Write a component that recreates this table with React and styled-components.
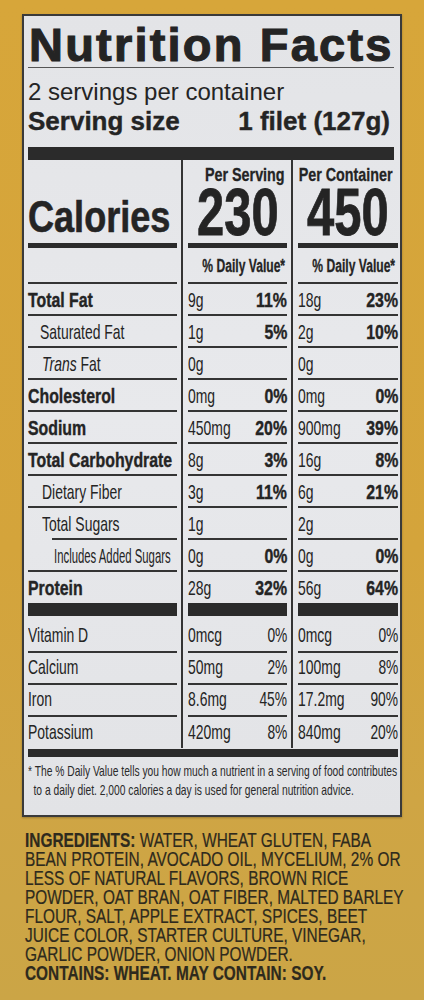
import React from 'react';
import styled, { createGlobalStyle } from 'styled-components';

const COND = `"Liberation Sans", Arial, Helvetica, sans-serif`;
const SANS = `"Liberation Sans", Arial, Helvetica, sans-serif`;
const INK = '#242424';
const RULE = '#343434';

const GlobalStyle = createGlobalStyle`
  html, body { margin: 0; padding: 0; background: #d3a33b; }
  #root { width: 424px; }
`;

const Page = styled.main`
  width: 424px;
  height: 1000px;
  box-sizing: border-box;
  overflow: hidden;
  padding: 14px 22px 0 22px;
  background: linear-gradient(180deg, #d7a63a 0%, #d4a43b 55%, #cfa544 80%, #cba546 100%);
`;

const Label = styled.section`
  box-sizing: border-box;
  width: 380px;
  height: 803px;
  background: linear-gradient(180deg, #e3e4e7 0%, #e8e9ec 50%, #e2e3e6 100%);
  border: 2px solid #3a3a3a;
  padding: 7px 2px 0 4px;
  color: ${INK};
  box-shadow: 0 1px 2px rgba(0, 0, 0, 0.25);
`;

const Header = styled.header`
  margin-right: 4px;
`;

const Title = styled.h1`
  margin: 0;
  font-family: ${SANS};
  font-weight: 700;
  font-size: 47px;
  line-height: 44px;
  letter-spacing: 2.2px;
  white-space: nowrap;
  -webkit-text-stroke: 1.1px ${INK};
  padding-left: 1px;
  border-bottom: 1.5px solid #555;
`;

const Servings = styled.div`
  margin-top: 11px;
  font-family: ${SANS};
  font-size: 24px;
  line-height: 26px;
  white-space: nowrap;
`;

const ServingSize = styled.div`
  margin-top: 2px;
  display: flex;
  justify-content: space-between;
  padding-right: 4px;
  font-family: ${SANS};
  font-weight: 700;
  font-size: 26px;
  line-height: 28px;
  white-space: nowrap;
  -webkit-text-stroke: 0.4px ${INK};
`;

const HeavyBar = styled.div`
  margin-top: 12px;
  height: 13px;
  background: #2b2b2b;
`;

const Row = styled.div`
  display: grid;
  grid-template-columns: 155px 110px 1fr;
`;

const Cell = styled.div`
  min-width: 0;
  padding: 0 ${(p) => (p.$col === 3 ? 0 : 4)}px 0 ${(p) => (p.$col === 1 ? 0 : 5)}px;
  border-right: ${(p) => (p.$col === 3 ? 'none' : `2px solid ${RULE}`)};
  display: flex;
  flex-direction: column;
  justify-content: flex-end;
`;

const CalLabel = styled.div`
  font-family: ${COND};
  font-weight: 700;
  font-size: 44px;
  line-height: 44px;
  white-space: nowrap;
  transform: scaleX(0.82);
  transform-origin: left center;
  -webkit-text-stroke: 0.6px ${INK};
`;

const ColHead = styled.div`
  padding-top: 5px;
  padding-right: ${(p) => p.$pr || 0}px;
  display: flex;
  justify-content: flex-end;
  font-family: ${COND};
  font-weight: 700;
  font-size: 19px;
  line-height: 20px;
  white-space: nowrap;
`;

const HeadText = styled.span`
  flex-shrink: 0;
  display: inline-block;
  transform: scaleX(${(p) => p.$sx});
  transform-origin: right center;
  -webkit-text-stroke: 0.3px ${INK};
`;

const BigNum = styled.div`
  display: flex;
  justify-content: center;
  font-family: ${COND};
  font-weight: 700;
  font-size: 67px;
  line-height: 54px;
  white-space: nowrap;
  -webkit-text-stroke: 0.8px ${INK};
`;

const BigDigits = styled.span`
  flex-shrink: 0;
  display: inline-block;
  transform: scaleX(0.73);
  transform-origin: center;
`;

const MidBar = styled.div`
  margin-top: 4px;
  height: 5px;
  background: #2b2b2b;
`;

const DvLine = styled.div`
  box-sizing: border-box;
  height: 34px;
  display: flex;
  justify-content: flex-end;
  align-items: flex-end;
  padding-bottom: 7px;
  padding-right: ${(p) => p.$pr || 0}px;
  font-family: ${COND};
  font-weight: 700;
  font-size: 18px;
  line-height: 18px;
  white-space: nowrap;
`;

const Line = styled.div`
  box-sizing: border-box;
  height: ${(p) => p.$h}px;
  margin-left: ${(p) => p.$inset || 0}px;
  border-top: ${(p) => (p.$rule ? `2px solid ${RULE}` : 'none')};
  display: flex;
  align-items: flex-end;
  justify-content: space-between;
  padding-bottom: ${(p) => p.$pb ?? 2}px;
  padding-left: ${(p) => p.$indent || 0}px;
  font-family: ${COND};
  font-size: 21px;
  line-height: 24px;
  white-space: nowrap;
`;

const Name = styled.span`
  flex-shrink: 0;
  display: inline-block;
  font-weight: ${(p) => (p.$bold ? 700 : 400)};
  transform: scaleX(${(p) => p.$sx});
  transform-origin: left center;
  ${(p) => (p.$bold ? `-webkit-text-stroke: 0.4px ${INK};` : '')}
`;

const Amount = styled.span`
  flex-shrink: 0;
  display: inline-block;
  transform: scaleX(0.664);
  transform-origin: left center;
`;

/* zero-width anchor at the right edge; its text grows leftwards */
const PctSlot = styled.span`
  flex-shrink: 0;
  width: 0;
  display: flex;
  justify-content: flex-end;
`;

const Pct = styled.span`
  flex-shrink: 0;
  display: inline-block;
  font-weight: ${(p) => (p.$bold ? 700 : 400)};
  transform: scaleX(${(p) => (p.$bold ? 0.755 : 0.656)});
  transform-origin: right center;
  ${(p) => (p.$bold ? `-webkit-text-stroke: 0.4px ${INK};` : '')}
`;

const ColBar = styled.div`
  margin-top: 1px;
  height: 13px;
  background: #2b2b2b;
`;

const FullBar = styled.div`
  margin-top: 1px;
  height: 8px;
  background: #2b2b2b;
`;

const Footnote = styled.div`
  margin-top: 4px;
  font-family: ${COND};
  font-size: 15px;
  line-height: 19px;
  color: #2a2a2a;
`;

const FootLine = styled.div`
  white-space: nowrap;
  padding-left: ${(p) => p.$indent || 0}px;
  transform: scaleX(0.685);
  transform-origin: left center;
`;

const Ingredients = styled.div`
  margin: 14px 0 0 3px;
  font-family: ${COND};
  font-size: 19.5px;
  line-height: 19px;
  color: #2e2a1d;
`;

const IngLine = styled.div`
  white-space: nowrap;
  transform: scaleX(0.79);
  transform-origin: left center;
  font-weight: ${(p) => (p.$bold ? 700 : 400)};
  -webkit-text-stroke: 0.2px #2e2a1d;
`;

const Strong = styled.b`
  font-weight: 700;
`;

const nutrients = [
  { label: 'Total Fat', bold: true, a1: '9g', p1: '11%', a2: '18g', p2: '23%' },
  { label: 'Saturated Fat', indent: 12, a1: '1g', p1: '5%', a2: '2g', p2: '10%' },
  { label: 'Trans', rest: ' Fat', indent: 14, a1: '0g', a2: '0g' },
  { label: 'Cholesterol', bold: true, a1: '0mg', p1: '0%', a2: '0mg', p2: '0%' },
  { label: 'Sodium', bold: true, a1: '450mg', p1: '20%', a2: '900mg', p2: '39%' },
  { label: 'Total Carbohydrate', bold: true, a1: '8g', p1: '3%', a2: '16g', p2: '8%' },
  { label: 'Dietary Fiber', indent: 14, a1: '3g', p1: '11%', a2: '6g', p2: '21%' },
  { label: 'Total Sugars', indent: 14, a1: '1g', a2: '2g' },
  { label: 'Includes Added Sugars', indent: 2, inset: 24, sx: 0.54, a1: '0g', p1: '0%', a2: '0g', p2: '0%' },
  { label: 'Protein', bold: true, a1: '28g', p1: '32%', a2: '56g', p2: '64%' },
];

const vitamins = [
  { label: 'Vitamin D', a1: '0mcg', p1: '0%', a2: '0mcg', p2: '0%', h: 35 },
  { label: 'Calcium', a1: '50mg', p1: '2%', a2: '100mg', p2: '8%', h: 32 },
  { label: 'Iron', a1: '8.6mg', p1: '45%', a2: '17.2mg', p2: '90%', h: 32 },
  { label: 'Potassium', a1: '420mg', p1: '8%', a2: '840mg', p2: '20%', h: 33 },
];

const ingredientLines = [
  'BEAN PROTEIN, AVOCADO OIL, MYCELIUM, 2% OR',
  'LESS OF NATURAL FLAVORS, BROWN RICE',
  'POWDER, OAT BRAN, OAT FIBER, MALTED BARLEY',
  'FLOUR, SALT, APPLE EXTRACT, SPICES, BEET',
  'JUICE COLOR, STARTER CULTURE, VINEGAR,',
  'GARLIC POWDER, ONION POWDER.',
];

function Values({ amount, pct, bold, h, rule, pb }) {
  return (
    <Line $h={h} $rule={rule} $pb={pb}>
      <Amount>{amount}</Amount>
      <PctSlot>{pct && <Pct $bold={bold}>{pct}</Pct>}</PctSlot>
    </Line>
  );
}

function NutrientRow({ n }) {
  const sx = n.sx ?? (n.bold ? 0.755 : 0.664);
  return (
    <Row>
      <Cell $col={1}>
        <Line $h={32} $rule $inset={n.inset} $indent={n.indent}>
          <Name $bold={n.bold} $sx={sx}>
            {n.rest ? <i>{n.label}</i> : n.label}
            {n.rest}
          </Name>
        </Line>
      </Cell>
      <Cell $col={2}>
        <Values h={32} rule amount={n.a1} pct={n.p1} bold />
      </Cell>
      <Cell $col={3}>
        <Values h={32} rule amount={n.a2} pct={n.p2} bold />
      </Cell>
    </Row>
  );
}

function VitaminRow({ v, first }) {
  return (
    <Row>
      <Cell $col={1}>
        <Line $h={v.h} $rule={!first} $pb={4}>
          <Name $sx={0.664}>{v.label}</Name>
        </Line>
      </Cell>
      <Cell $col={2}>
        <Values h={v.h} rule={!first} pb={4} amount={v.a1} pct={v.p1} />
      </Cell>
      <Cell $col={3}>
        <Values h={v.h} rule={!first} pb={4} amount={v.a2} pct={v.p2} />
      </Cell>
    </Row>
  );
}

export default function App() {
  return (
    <>
      <GlobalStyle />
      <Page>
        <Label>
          <Header>
            <Title>Nutrition Facts</Title>
            <Servings>2 servings per container</Servings>
            <ServingSize>
              <span>Serving size</span>
              <span>1 filet (127g)</span>
            </ServingSize>
            <HeavyBar />
          </Header>

          <Row>
            <Cell $col={1}>
              <CalLabel>Calories</CalLabel>
              <MidBar />
            </Cell>
            <Cell $col={2}>
              <ColHead $pr={2}><HeadText $sx={0.754}>Per Serving</HeadText></ColHead>
              <BigNum><BigDigits>230</BigDigits></BigNum>
              <MidBar />
            </Cell>
            <Cell $col={3}>
              <ColHead $pr={5}><HeadText $sx={0.754}>Per Container</HeadText></ColHead>
              <BigNum><BigDigits>450</BigDigits></BigNum>
              <MidBar />
            </Cell>
          </Row>

          <Row>
            <Cell $col={1}><DvLine /></Cell>
            <Cell $col={2}><DvLine $pr={2}><HeadText $sx={0.672}>% Daily Value*</HeadText></DvLine></Cell>
            <Cell $col={3}><DvLine $pr={3}><HeadText $sx={0.672}>% Daily Value*</HeadText></DvLine></Cell>
          </Row>

          {nutrients.map((n) => (
            <NutrientRow key={n.label} n={n} />
          ))}

          <Row>
            <Cell $col={1}><ColBar /></Cell>
            <Cell $col={2}><ColBar /></Cell>
            <Cell $col={3}><ColBar /></Cell>
          </Row>

          {vitamins.map((v, i) => (
            <VitaminRow key={v.label} v={v} first={i === 0} />
          ))}

          <FullBar />

          <Footnote>
            <FootLine>* The % Daily Value tells you how much a nutrient in a serving of food contributes</FootLine>
            <FootLine $indent={8}>to a daily diet. 2,000 calories a day is used for general nutrition advice.</FootLine>
          </Footnote>
        </Label>

        <Ingredients>
          <IngLine>
            <Strong>INGREDIENTS:</Strong> WATER, WHEAT GLUTEN, FABA
          </IngLine>
          {ingredientLines.map((l) => (
            <IngLine key={l}>{l}</IngLine>
          ))}
          <IngLine $bold>CONTAINS: WHEAT. MAY CONTAIN: SOY.</IngLine>
        </Ingredients>
      </Page>
    </>
  );
}
